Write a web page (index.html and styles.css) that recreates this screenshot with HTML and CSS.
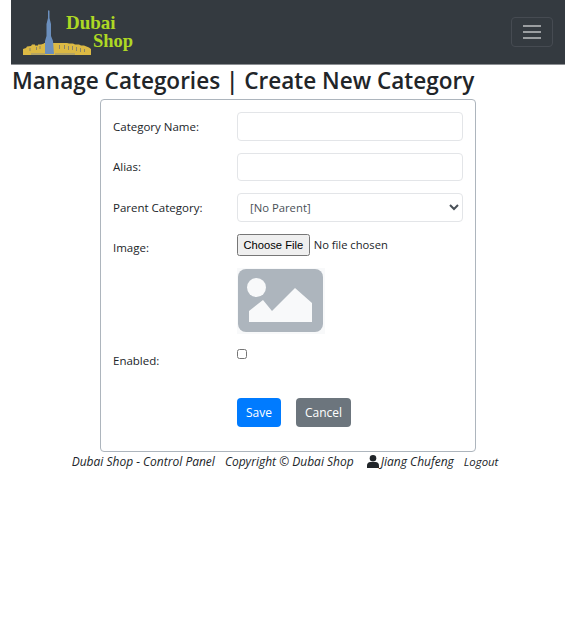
FILE: index.html

```html
<!DOCTYPE html>
<html lang="en">
<head>
    <meta charset="UTF-8">
    <meta name="viewport" content="width=device-width, initial-scale=1.0">
    <title>Manage Categories</title>
    <link rel="stylesheet" href="styles.css">
</head>
<body>
    <div class="container">
        <nav class="navbar">
            <a class="brand" href="#">
                <svg class="skyline" width="68" height="45" viewBox="0 0 68 45">
                    <path fill="#dcb944" d="M0 45V39L3 38L4 36.500L8 36L9 34.500H12V35.500H15V34.500H18L21 33.500V33H34L36 33L38 33H44L46 33.500H50L52 34.500H56L58 35.500H61L66 37.500L68 39V45Z"/>
                    <path fill="#9c9778" d="M8 43H22V45H8ZM32 43H52V45H32Z" opacity="0.6"/>
                    <path fill="#8a8468" d="M6.500 38H7.500V41H6.500ZM13 37H14V40H13ZM16.500 36H17.500V39H16.500ZM36 35H37V39H36ZM41 35H42V39H41ZM45 36H46V40H45ZM49 36H50V40H49ZM53 37H54V41H53ZM57 38H58V42H57ZM61 39H62V42H61Z"/>
                    <path fill="#6b8fbe" d="M22 44V31L23.500 26V14L25 8V1L25.800 0L26.500 1V8L28 14V26L30 31L31 44Z"/>
                </svg>
                <span class="brand-text">
                    <span class="brand-top">Dubai</span>
                    <span class="brand-bottom">Shop</span>
                </span>
            </a>
            <button class="toggler" type="button" aria-label="Toggle navigation">
                <span class="toggler-bar"></span>
                <span class="toggler-bar"></span>
                <span class="toggler-bar"></span>
            </button>
        </nav>

        <h2 class="page-title">Manage Categories | Create New Category</h2>

        <form class="category-form">
            <div class="form-row">
                <label for="name">Category Name:</label>
                <input class="form-control" id="name" type="text">
            </div>
            <div class="form-row">
                <label for="alias">Alias:</label>
                <input class="form-control" id="alias" type="text">
            </div>
            <div class="form-row">
                <label for="parent">Parent Category:</label>
                <select class="form-control form-select" id="parent">
                    <option>[No Parent]</option>
                </select>
            </div>
            <div class="form-row image-row">
                <label for="image">Image:</label>
                <div class="image-field">
                    <input class="file-input" id="image" type="file">
                    <svg class="thumbnail" width="88" height="66" viewBox="0 0 88 66">
                        <rect width="88" height="66" fill="#f8f9fa"/>
                        <rect x="1" y="1" width="85" height="63" rx="8" fill="#adb5bd"/>
                        <circle cx="19.500" cy="19.500" r="9.500" fill="#f8f9fa"/>
                        <path fill="#f8f9fa" d="M12 54V43L26 32L35 43L58 20L75 35V54Z"/>
                    </svg>
                </div>
            </div>
            <div class="form-row enabled-row">
                <label for="enabled">Enabled:</label>
                <input class="check" id="enabled" type="checkbox">
            </div>
            <div class="form-buttons">
                <button class="btn btn-save" type="submit">Save</button>
                <button class="btn btn-cancel" type="button">Cancel</button>
            </div>
        </form>

        <footer class="footer">
            <span>Dubai Shop - Control Panel</span>
            <span>Copyright © Dubai Shop</span>
            <span class="user">
                <svg width="12" height="13" viewBox="0 0 12 13"><circle cx="6" cy="3.300" r="3.300" fill="#212529"/><path fill="#212529" d="M0 13V10.500C0 8.500 1.500 7 3.300 7H8.700C10.500 7 12 8.500 12 10.500V13Z"/></svg>
                Jiang Chufeng
            </span>
            <span class="logout">Logout</span>
        </footer>
    </div>
</body>
</html>
```

FILE: styles.css

```css
body {
    font-family: "Open Sans", "Noto Sans", Arial, sans-serif;
    font-size: 12px;
    color: #212529;
    background-color: #fff;
    margin: 0;
    padding: 0;
}

.container {
    padding: 0 11px;
}

.navbar {
    display: flex;
    justify-content: space-between;
    align-items: center;
    height: 65px;
    padding: 0 12px;
    background-color: #343a40;
    border-bottom: 1px solid #8c8f93;
    box-sizing: border-box;
}

.brand {
    display: flex;
    align-items: center;
    text-decoration: none;
}

.skyline {
    display: block;
}

.brand-text {
    display: flex;
    flex-direction: column;
    margin-left: -25px;
    font-family: "Liberation Serif", serif;
    font-weight: bold;
    font-size: 19px;
    line-height: 19px;
    color: #aed824;
}

.brand-bottom {
    padding-left: 27px;
    font-size: 18.500px;
}

.toggler {
    display: flex;
    flex-direction: column;
    justify-content: center;
    gap: 4px;
    width: 42px;
    height: 30px;
    padding: 0 11px;
    background: transparent;
    border: 1px solid #464b52;
    border-radius: 4px;
}

.toggler-bar {
    display: block;
    height: 2px;
    background-color: #9b9ea1;
}

.page-title {
    margin: 0 0 2px 1px;
    font-size: 22.550px;
    font-weight: 600;
    line-height: 32px;
    white-space: nowrap;
}

.category-form {
    width: 376px;
    height: 353px;
    margin: 0 auto;
    padding: 12px 12px 0;
    border: 1px solid #adb5bd;
    border-radius: 4px;
    box-sizing: border-box;
}

.form-row {
    display: flex;
    align-items: center;
    margin-bottom: 12px;
    font-size: 11.500px;
}

.form-row label {
    width: 124px;
    flex-shrink: 0;
}

.form-control {
    width: 226px;
    height: 28.500px;
    padding: 0 12px;
    font: inherit;
    color: #495057;
    background-color: #fff;
    border: 1px solid #e3e5e8;
    border-radius: 4px;
    box-sizing: border-box;
}

.form-select {
    padding-left: 8px;
    font-size: 11.300px;
}

.image-row {
    align-items: flex-start;
    margin-bottom: 0;
}

.image-row label {
    padding-top: 6px;
}

.image-field {
    display: flex;
    flex-direction: column;
    gap: 12px;
}

.file-input {
    height: 22px;
    font: inherit;
    font-size: 11.200px;
}

.file-input::file-selector-button {
    height: 22px;
    padding: 0 4.500px;
}

.thumbnail {
    display: block;
}

.enabled-row {
    align-items: flex-start;
    height: 48.500px;
    margin-top: 15.500px;
    margin-bottom: 0;
}

.enabled-row label {
    padding-top: 4px;
}

.check {
    width: 10px;
    height: 10px;
    margin: 0;
}

.form-buttons {
    display: flex;
    gap: 15px;
    margin-left: 124px;
}

.btn {
    height: 29px;
    padding: 0 9px;
    font: inherit;
    color: #fff;
    border: 0;
    border-radius: 4px;
}

.btn-save {
    background-color: #007bff;
}

.btn-cancel {
    background-color: #6c757d;
}

.footer {
    display: flex;
    justify-content: center;
    gap: 10px;
    margin-top: 1px;
    padding-right: 6px;
    font-style: italic;
    line-height: 18px;
}

.user {
    margin-left: 3px;
}

.user svg {
    margin-right: -1px;
    vertical-align: -2px;
}

.logout {
    font-size: 11.400px;
}
```
